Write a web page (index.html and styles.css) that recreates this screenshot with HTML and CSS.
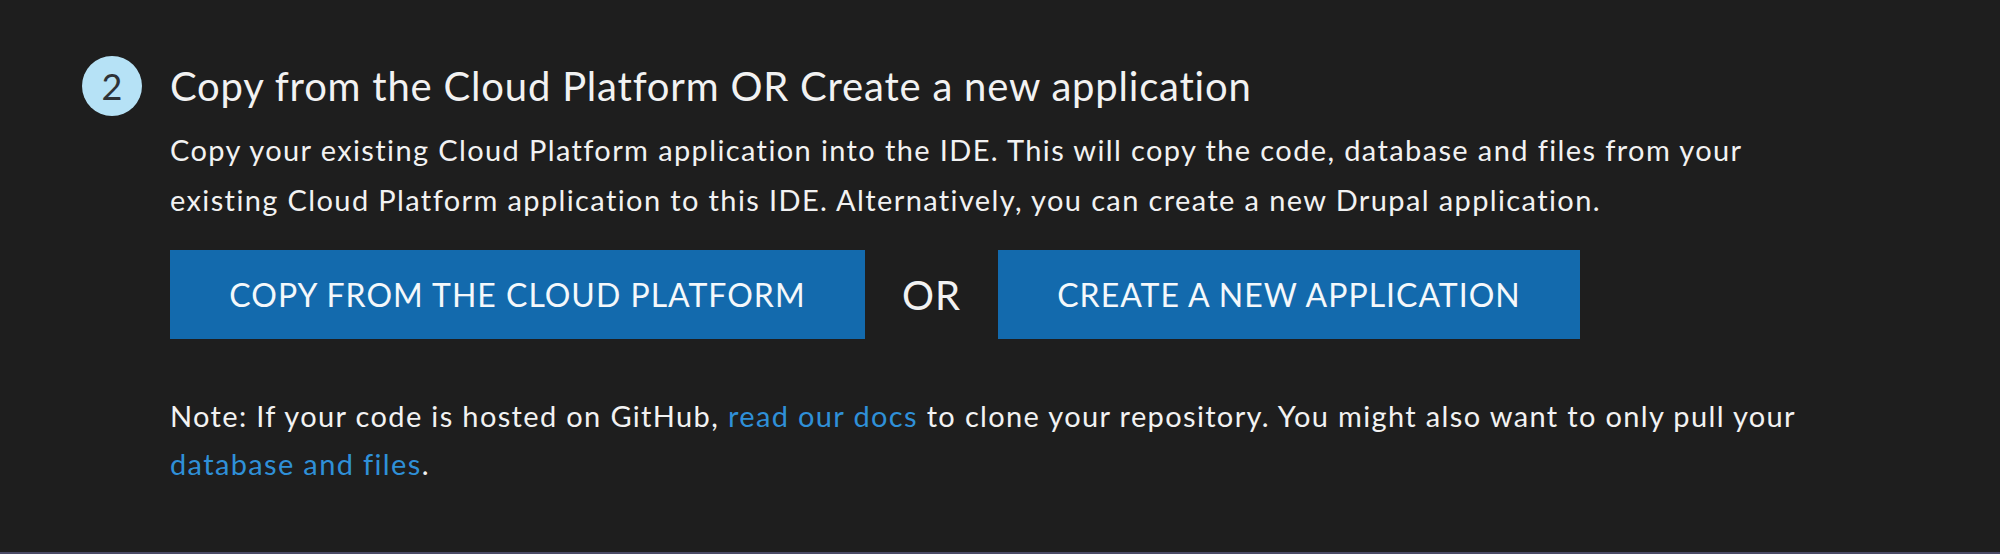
FILE: index.html
```html
<!DOCTYPE html>
<html lang="en">
<head>
    <meta charset="UTF-8">
    <meta name="viewport" content="width=device-width, initial-scale=1.0">
    <title>Create your IDE</title>
    <link rel="stylesheet" href="styles.css">
</head>
<body>
    <div class="step">
        <div class="step-num">2</div>
        <div class="step-body">
            <h2>Copy from the Cloud Platform OR Create a new application</h2>
            <p class="intro">Copy your existing Cloud Platform application into the IDE. This will copy the code, database and files from your existing Cloud Platform application to this IDE. Alternatively, you can create a new Drupal application.</p>
            <div class="actions">
                <button class="btn btn-copy" type="button">COPY FROM THE CLOUD PLATFORM</button>
                <span class="or">OR</span>
                <button class="btn btn-create" type="button">CREATE A NEW APPLICATION</button>
            </div>
            <p class="note">Note: If your code is hosted on GitHub, <a href="#">read our docs</a> to clone your repository. You might also want to only pull your <a href="#">database and files</a>.</p>
        </div>
    </div>
</body>
</html>
```

FILE: styles.css
```css
html, body {
    height: 100%;
}

body {
    font-family: Lato, "Open Sans", Arial, sans-serif;
    background-color: #1e1e1e;
    color: #f2f2f2;
    margin: 0;
    padding: 0;
    box-sizing: border-box;
    border-bottom: 2px solid #4a4a66;
}

.step {
    display: flex;
    gap: 28px;
    padding: 56px 0 0 82px;
}

.step-num {
    flex: none;
    width: 60px;
    height: 60px;
    border-radius: 50%;
    background: #b6e2f6;
    color: #2e3236;
    font-size: 36px;
    line-height: 60px;
    text-align: center;
}

.step-body h2 {
    margin: 0;
    font-size: 40px;
    font-weight: 400;
    letter-spacing: 0.8px;
    line-height: 60px;
}

.intro {
    margin: 9px 0 0;
    width: 1610px;
    font-size: 29px;
    letter-spacing: 1.38px;
    line-height: 50px;
}

.actions {
    display: flex;
    align-items: center;
    margin-top: 25px;
}

.btn {
    height: 89px;
    border: none;
    background: #136aad;
    color: #f4f8fb;
    font-family: inherit;
    font-size: 32px;
    letter-spacing: 1px;
    padding: 0;
    cursor: pointer;
}

.btn-copy {
    width: 695px;
}

.btn-create {
    width: 582px;
}

.or {
    width: 133px;
    text-align: center;
    font-size: 40px;
    letter-spacing: 1px;
}

.note {
    margin: 53px 0 0;
    width: 1680px;
    font-size: 29px;
    letter-spacing: 1.35px;
    line-height: 48px;
}

.note a {
    color: #2f90d8;
    text-decoration: none;
}
```
